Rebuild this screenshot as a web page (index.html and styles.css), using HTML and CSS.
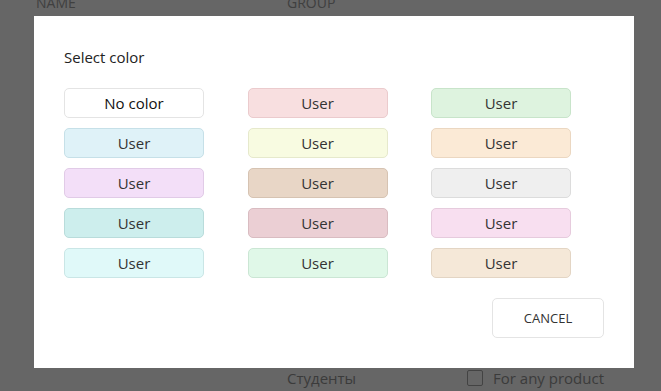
FILE: index.html
```html
<!DOCTYPE html>
<html lang="en">
  <head>
    <meta charset="UTF-8" />
    <meta name="viewport" content="width=device-width, initial-scale=1.0" />
    <title>Select color</title>
    <link rel="stylesheet" href="styles.css">
  </head>
  <body>
    <div class="page">
      <div class="table-head">
        <span class="col-name">NAME</span>
        <span class="col-group">GROUP</span>
      </div>
      <div class="table-row">
        <span class="col-name"></span>
        <span class="col-group">Студенты</span>
        <label class="any-product"><span class="check"></span>For any product</label>
      </div>
    </div>

    <div class="overlay">
      <div class="dialog">
        <p class="dialog-title">Select color</p>
        <div class="colors">
          <button class="swatch none">No color</button>
          <button class="swatch c-pink">User</button>
          <button class="swatch c-green">User</button>
          <button class="swatch c-blue">User</button>
          <button class="swatch c-yellow">User</button>
          <button class="swatch c-peach">User</button>
          <button class="swatch c-lavender">User</button>
          <button class="swatch c-tan">User</button>
          <button class="swatch c-gray">User</button>
          <button class="swatch c-teal">User</button>
          <button class="swatch c-mauve">User</button>
          <button class="swatch c-rose">User</button>
          <button class="swatch c-cyan">User</button>
          <button class="swatch c-mint">User</button>
          <button class="swatch c-beige">User</button>
        </div>
        <div class="actions">
          <button class="cancel">CANCEL</button>
        </div>
      </div>
    </div>
  </body>
</html>
```

FILE: styles.css
```css
body {
  margin: 0;
  padding: 0;
  font-family: "Open Sans", "Noto Sans", sans-serif;
  background-color: white;
  color: #999;
  height: 391px;
  overflow: hidden;
}
.page {
  display: flex;
  flex-direction: column;
  justify-content: space-between;
  height: 391px;
}
.table-head {
  display: flex;
  margin-top: -7px;
  font-size: 14px;
  color: #a0a0a0;
}
.table-row {
  display: flex;
  align-items: center;
  height: 26px;
  font-size: 15px;
  color: #959595;
}
.col-name {
  width: 251px;
  padding-left: 36px;
}
.col-group {
  width: 180px;
}
.any-product {
  display: flex;
  align-items: center;
  gap: 10px;
}
.check {
  width: 14px;
  height: 14px;
  border: 1px solid #a8a8a8;
  border-radius: 2px;
}

.overlay {
  position: fixed;
  inset: 0;
  background-color: rgba(0, 0, 0, 0.6);
  display: flex;
  justify-content: center;
  align-items: flex-start;
  padding-top: 16px;
}
.dialog {
  width: 540px;
  padding: 30px;
  background-color: white;
  margin-left: 7px;
}
.dialog-title {
  margin: 0 0 20px;
  font-size: 15px;
  line-height: 22px;
  color: #222;
}
.colors {
  display: grid;
  grid-template-columns: repeat(3, 140px);
  column-gap: 43.5px;
  row-gap: 10px;
}
.swatch {
  height: 30px;
  border: 1px solid #e4e4e4;
  border-radius: 5px;
  font-family: "Open Sans", "Noto Sans", sans-serif;
  font-size: 15px;
  color: #333;
  padding: 0;
  background-color: white;
}
.swatch.none { color: #111; }
.c-pink { background-color: #f8dfe0; border-color: #ebcbcd; }
.c-green { background-color: #def3df; border-color: #c8e4ca; }
.c-blue { background-color: #dff2f8; border-color: #c6e0e8; }
.c-yellow { background-color: #f8fbe1; border-color: #e6e9cc; }
.c-peach { background-color: #fbead6; border-color: #ebd7c1; }
.c-lavender { background-color: #f3dff8; border-color: #e1cbe7; }
.c-tan { background-color: #e8d6c6; border-color: #d6c3b2; }
.c-gray { background-color: #efefef; border-color: #dcdcdc; }
.c-teal { background-color: #cdeeed; border-color: #b9dcdb; }
.c-mauve { background-color: #ebcfd4; border-color: #d9bcc1; }
.c-rose { background-color: #f8dff0; border-color: #e6cbdd; }
.c-cyan { background-color: #e0f9f9; border-color: #cae6e6; }
.c-mint { background-color: #e0f8e8; border-color: #cbe6d4; }
.c-beige { background-color: #f5e8d8; border-color: #e3d5c4; }

.actions {
  display: flex;
  justify-content: flex-end;
  margin-top: 20px;
}
.cancel {
  width: 112px;
  height: 40px;
  border: 1px solid #e4e4e4;
  border-radius: 5px;
  background-color: white;
  font-family: "Open Sans", "Noto Sans", sans-serif;
  font-size: 13px;
  color: #333;
}
```
